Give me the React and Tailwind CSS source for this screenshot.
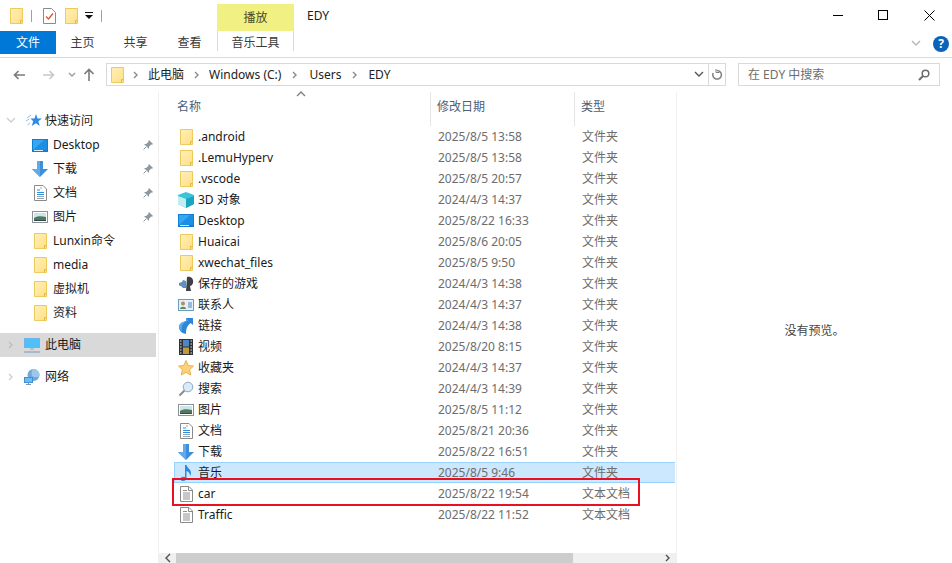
import React from 'react';

const Folder = ({ className = '' }) => (
  <svg className={className} width="13" height="16" viewBox="0 0 13 16" fill="none">
    <defs>
      <linearGradient id="fold" x1="0" y1="0" x2="1" y2="1">
        <stop offset="0" stopColor="#fff0b8" />
        <stop offset="1" stopColor="#ffdf85" />
      </linearGradient>
    </defs>
    <path d="M.5.5h12v15H.5z" fill="url(#fold)" stroke="#eccb5c" />
    <path d="M10.500 15.500v-3h2" stroke="#e2b93f" />
  </svg>
);

const TextFile = () => (
  <svg width="13" height="16" viewBox="0 0 13 16" fill="none">
    <path d="M.5.5h8.500l3.500 3.500v11.500H.5z" fill="#fff" stroke="#8a8a8a" />
    <path d="M8.500.5v4h4" stroke="#8a8a8a" />
    <path d="M3 4.500h4M3 7h7M3 9h7M3 11h7M3 13h7" stroke="#8f8f8f" />
  </svg>
);

const DocFile = () => (
  <svg width="13" height="16" viewBox="0 0 13 16" fill="none">
    <path d="M.5.5h8.500l3.500 3.500v11.500H.5z" fill="#fff" stroke="#8a8a8a" />
    <path d="M3 5h3M3 7.500h7M3 9.500h7" stroke="#2b8fe0" strokeWidth="1.200" />
    <path d="M6 3h2M3 11.500h7M3 13.500h7" stroke="#9aa5ae" />
  </svg>
);

const DesktopIcon = () => (
  <svg width="16" height="13" viewBox="0 0 16 13">
    <rect width="16" height="13" fill="#0f7fd6" />
    <path d="M1 1h14v10H1z" fill="#35a7f2" />
    <path d="M1 11 12 1h3v10z" fill="#1c8fe4" />
    <path d="M2 11.500h9" stroke="#d8eefc" />
  </svg>
);

const DownArrow = () => (
  <svg width="16" height="16" viewBox="0 0 16 16">
    <path d="M5 0h6v8h5l-8 8-8-8h5z" fill="#3d8edb" />
    <path d="M5 0h3v16L0 8h5z" fill="#62a9ea" />
  </svg>
);

const PictureIcon = () => (
  <svg width="16" height="12" viewBox="0 0 16 12">
    <rect x=".5" y=".5" width="15" height="11" fill="#fff" stroke="#8c9296" />
    <rect x="2" y="2" width="12" height="8" fill="#cfe3ea" />
    <path d="M2 7c3-2 7-2 12-1v4H2z" fill="#4d7a5e" />
    <path d="M2 9h12v1H2z" fill="#2e4a55" />
  </svg>
);

const Cube = () => (
  <svg width="16" height="16" viewBox="0 0 16 16">
    <path d="M8 0l8 3v9l-8 4-8-4V3z" fill="#39c5d6" />
    <path d="M0 4l8 3v9l-8-4z" fill="#c2eef2" />
    <path d="M16 4L8 7v9l8-4z" fill="#1ba3c2" />
  </svg>
);

const GameIcon = () => (
  <svg width="16" height="16" viewBox="0 0 16 16">
    <path d="M9 1c4-1 7 2 6 6-.5 2-2 3-3 3l1 5H8z" fill="#3c4148" />
    <path d="M1 7l3-1 1-2 3 1v7H5l-2-2-2-.5z" fill="#5c8fc6" />
  </svg>
);

const ContactIcon = () => (
  <svg width="16" height="12" viewBox="0 0 16 12">
    <rect x=".5" y=".5" width="15" height="11" fill="#e3f0fa" stroke="#6a9cc4" />
    <circle cx="5" cy="4.500" r="2" fill="#b98a5c" />
    <path d="M2 10c0-3 6-3 6 0z" fill="#5d8d4f" />
    <path d="M10 4h4M10 6h4M10 8h4" stroke="#4b87b8" />
  </svg>
);

const LinkIcon = () => (
  <svg width="14" height="16" viewBox="0 0 14 16">
    <path d="M7 0h7v7l-2.500-2C8 8 7 11 7 16 2 15 0 12 0 9c0-3 3-5 7-6z" fill="#2f86d8" />
    <path d="M7 0l2.500 2.500C5 4 2 7 3 13 1 12 0 10.500 0 9c0-3 3-5 7-6z" fill="#58a6ec" />
  </svg>
);

const VideoIcon = () => (
  <svg width="14" height="16" viewBox="0 0 14 16">
    <rect width="14" height="16" fill="#2f3338" />
    <path d="M1 2h1.500M1 5h1.500M1 8h1.500M1 11h1.500M1 14h1.500M11.500 2H13M11.500 5H13M11.500 8H13M11.500 11H13M11.500 14H13" stroke="#dfe3e6" />
    <rect x="4" y="1" width="6" height="6.500" fill="#4a88c2" />
    <rect x="4" y="8.500" width="6" height="6.500" fill="#c29a3a" />
  </svg>
);

const StarIcon = () => (
  <svg width="16" height="16" viewBox="0 0 16 16">
    <path d="M8 .5l2.300 5 5.200.6-3.900 3.600 1.100 5.300L8 12.300 3.300 15l1.100-5.300L.5 6.100l5.200-.6z" fill="#fbd27a" stroke="#eeb04e" />
  </svg>
);

const SearchIcon = () => (
  <svg width="16" height="16" viewBox="0 0 16 16" fill="none">
    <circle cx="10" cy="6" r="4.800" fill="#d6ebfb" stroke="#8fa9bc" />
    <path d="M6.500 9.500 1.500 14.500" stroke="#8b8b8b" strokeWidth="2" />
  </svg>
);

const MusicIcon = () => (
  <svg width="14" height="16" viewBox="0 0 14 16">
    <path d="M6 0h1.500c.5 3 4.500 4 4.500 8 0 1-.3 2-1 3 .2-3-2-4.500-3.500-5v7.500c0 1.500-1.500 2.500-3.500 2.500S1 15 1.500 13.500 4 11.500 6 12z" fill="#2a8ae0" />
  </svg>
);

const Computer = () => (
  <svg width="16" height="15" viewBox="0 0 16 15">
    <rect width="16" height="10" fill="#6fb4e4" />
    <rect x="1" y="1" width="14" height="8" fill="#4fc0fb" />
    <path d="M6 10h4v2H6z" fill="#a9c4d8" />
    <path d="M0 14h16" stroke="#8fb0c9" strokeWidth="1.500" />
  </svg>
);

const Network = () => (
  <svg width="16" height="16" viewBox="0 0 16 16">
    <circle cx="9.500" cy="6" r="6" fill="#6ea9d8" />
    <path d="M9 0c4 0 6.500 3 6.500 6S13 8 10 8 7 3 9 0z" fill="#9cc7e8" />
    <rect y="8" width="9" height="6" fill="#3f8fd2" />
    <rect x="1" y="9" width="7" height="4" fill="#69bdf5" />
    <path d="M2 15.500h5M4.500 14v1.500" stroke="#7a99b1" />
  </svg>
);

const QuickStar = () => (
  <svg width="16" height="14" viewBox="0 0 16 14">
    <path d="M10 0l1.500 4.500H16l-3.600 2.800 1.300 4.700L10 9.300 5.800 12l1.400-4.700-2.700-2.800h4z" fill="#2d8be0" />
    <path d="M5 1 1 4M3.500 5 0 7M4 9 1.500 11" stroke="#8cc2ee" />
  </svg>
);

const Pin = () => (
  <svg width="10" height="10" viewBox="0 0 10 10" fill="#8e98a2">
    <path d="M6 0l4 4-1 .7-.7-.2L6 6.800 6 9 1 4l2.200 0L5.500 1.700 5.300 1z" />
    <path d="M3 7 .5 9.500" stroke="#8e98a2" />
  </svg>
);

const Chevron = ({ dir = 'right', className = '' }) => {
  const d = { right: 'M3 2l3 3-3 3', down: 'M1 2l4 4 4-4', up: 'M1 7l4-4 4 4', left: 'M7 1L3 5l4 4' }[dir];
  return (
    <svg className={className} width="10" height="10" viewBox="0 0 10 10" fill="none" stroke="currentColor" strokeWidth="1.400">
      <path d={d} />
    </svg>
  );
};

const NAV_ITEMS = [
  { label: 'Desktop', icon: <DesktopIcon />, pin: true },
  { label: '下载', icon: <DownArrow />, pin: true },
  { label: '文档', icon: <DocFile />, pin: true },
  { label: '图片', icon: <PictureIcon />, pin: true },
  { label: 'Lunxin命令', icon: <Folder /> },
  { label: 'media', icon: <Folder /> },
  { label: '虚拟机', icon: <Folder /> },
  { label: '资料', icon: <Folder /> },
];

const FILES = [
  { name: '.android', date: '2025/8/5 13:58', type: '文件夹', icon: <Folder /> },
  { name: '.LemuHyperv', date: '2025/8/5 13:58', type: '文件夹', icon: <Folder /> },
  { name: '.vscode', date: '2025/8/5 20:57', type: '文件夹', icon: <Folder /> },
  { name: '3D 对象', date: '2024/4/3 14:37', type: '文件夹', icon: <Cube /> },
  { name: 'Desktop', date: '2025/8/22 16:33', type: '文件夹', icon: <DesktopIcon /> },
  { name: 'Huaicai', date: '2025/8/6 20:05', type: '文件夹', icon: <Folder /> },
  { name: 'xwechat_files', date: '2025/8/5 9:50', type: '文件夹', icon: <Folder /> },
  { name: '保存的游戏', date: '2024/4/3 14:38', type: '文件夹', icon: <GameIcon /> },
  { name: '联系人', date: '2024/4/3 14:37', type: '文件夹', icon: <ContactIcon /> },
  { name: '链接', date: '2024/4/3 14:38', type: '文件夹', icon: <LinkIcon /> },
  { name: '视频', date: '2025/8/20 8:15', type: '文件夹', icon: <VideoIcon /> },
  { name: '收藏夹', date: '2024/4/3 14:37', type: '文件夹', icon: <StarIcon /> },
  { name: '搜索', date: '2024/4/3 14:39', type: '文件夹', icon: <SearchIcon /> },
  { name: '图片', date: '2025/8/5 11:12', type: '文件夹', icon: <PictureIcon /> },
  { name: '文档', date: '2025/8/21 20:36', type: '文件夹', icon: <DocFile /> },
  { name: '下载', date: '2025/8/22 16:51', type: '文件夹', icon: <DownArrow /> },
  { name: '音乐', date: '2025/8/5 9:46', type: '文件夹', icon: <MusicIcon />, selected: true },
  { name: 'car', date: '2025/8/22 19:54', type: '文本文档', icon: <TextFile /> },
  { name: 'Traffic', date: '2025/8/22 11:52', type: '文本文档', icon: <TextFile /> },
];

function TitleBar() {
  return (
    <div className="flex h-[31px] items-start">
      <div className="flex h-full w-[217px] items-center pl-[10px]">
        <Folder />
        <div className="ml-[8px] h-[12px] w-px bg-[#a0a0a0]" />
        <svg className="ml-[11px]" width="13" height="16" viewBox="0 0 13 16" fill="none">
          <path d="M.5.5h8l4 4v11H.5z" fill="#fff" stroke="#8a8a8a" />
          <path d="M3 8.500l2.500 2.500L10 5.500" stroke="#e2562b" strokeWidth="1.400" />
        </svg>
        <Folder className="ml-[9px]" />
        <svg className="ml-[7px]" width="8" height="8" viewBox="0 0 8 8">
          <path d="M0 0h8v1H0zM0 3h8L4 7z" fill="#111" />
        </svg>
        <div className="ml-[8px] h-[12px] w-px bg-[#a0a0a0]" />
      </div>
      <div className="mt-[4px] flex h-[27px] w-[77px] items-center justify-center bg-[#f1f083] text-[#4a4a2a]">播放</div>
      <div className="ml-[13px] pt-[7px] leading-[17px] text-[#1a1a1a]">EDY</div>
      <div className="ml-auto flex h-[30px] items-center">
        <div className="flex w-[45px] justify-center">
          <div className="h-px w-[10px] bg-black" />
        </div>
        <div className="flex w-[46px] justify-center">
          <div className="h-[10px] w-[10px] border border-black" />
        </div>
        <div className="flex w-[46px] justify-center">
          <svg width="11" height="11" viewBox="0 0 11 11" stroke="#000" strokeWidth="1">
            <path d="M.5.5l10 10M10.500.5l-10 10" />
          </svg>
        </div>
      </div>
    </div>
  );
}

function RibbonTabs() {
  return (
    <div className="flex h-[27px] items-start border-b border-[#dadada] text-[#3a3a3a]">
      <div className="flex h-[23px] w-[56px] items-center justify-center bg-[#0078d7] text-white">文件</div>
      <div className="flex h-[23px] w-[53px] items-center justify-center">主页</div>
      <div className="flex h-[23px] w-[53px] items-center justify-center">共享</div>
      <div className="flex h-[23px] w-[55px] items-center justify-center">查看</div>
      <div className="flex h-[20px] w-[77px] items-center justify-center border-x border-[#dadada] pt-[4px]">音乐工具</div>
      <div className="ml-auto flex h-[23px] items-center pr-[3px] pt-[3px]">
        <Chevron dir="down" className="text-[#b5b5b5]" />
        <div className="ml-[12px] flex h-[16px] w-[16px] items-center justify-center rounded-full bg-[#0a63b8] text-[12px] font-bold text-white">?</div>
      </div>
    </div>
  );
}

function AddressBar() {
  return (
    <div className="mt-[5px] flex h-[23px] items-center">
      <div className="flex w-[106px] items-center text-[#808080]">
        <svg className="ml-[13px]" width="12" height="10" viewBox="0 0 12 10" fill="none" stroke="#7a7a7a" strokeWidth="1.600">
          <path d="M12 5H1.500M5.500 1l-4 4 4 4" />
        </svg>
        <svg className="ml-[18px]" width="12" height="10" viewBox="0 0 12 10" fill="none" stroke="#c8c8c8" strokeWidth="1.600">
          <path d="M0 5h10.500M6.500 1l4 4-4 4" />
        </svg>
        <svg className="ml-[13px]" width="8" height="6" viewBox="0 0 8 6" fill="none" stroke="#9a9a9a" strokeWidth="1.300">
          <path d="M1 1l3 3 3-3" />
        </svg>
        <svg className="ml-[7px]" width="12" height="13" viewBox="0 0 12 13" fill="none" stroke="#7a7a7a" strokeWidth="1.600">
          <path d="M6 13V1.500M1.500 6l4.500-4.500L10.500 6" />
        </svg>
      </div>
      <div className="flex h-full w-[620px] items-center border border-[#d9d9d9] pl-[4px] text-[#222]">
        <Folder />
        <Chevron dir="right" className="ml-[7px] text-[#8a8a8a]" />
        <span className="ml-[7px]">此电脑</span>
        <Chevron dir="right" className="ml-[8px] text-[#8a8a8a]" />
        <span className="ml-[7px]">Windows (C:)</span>
        <Chevron dir="right" className="ml-[9px] text-[#8a8a8a]" />
        <span className="ml-[9px]">Users</span>
        <Chevron dir="right" className="ml-[9px] text-[#8a8a8a]" />
        <span className="ml-[8px]">EDY</span>
        <Chevron dir="down" className="ml-auto mr-[4px] text-[#555]" />
        <div className="flex h-full w-[17px] items-center justify-center border-l border-[#d9d9d9]">
          <svg width="11" height="12" viewBox="0 0 11 12" fill="none" stroke="#808080" strokeWidth="1.500">
            <path d="M5 1.500a4.300 4.300 0 1 1-3.800 2.500" />
            <path d="M4 0v3.500h3.500" strokeWidth="1" />
          </svg>
        </div>
      </div>
      <div className="ml-[12px] flex h-full w-[202px] items-center border border-[#d9d9d9] pl-[9px] pr-[9px] text-[#6d6d6d]">
        <span>在 EDY 中搜索</span>
        <svg className="ml-auto" width="12" height="12" viewBox="0 0 12 12" fill="none" stroke="#6b6b6b">
          <circle cx="7.500" cy="4.500" r="3.300" strokeWidth="1.500" />
          <path d="M5 7 1 11" strokeWidth="2" />
        </svg>
      </div>
    </div>
  );
}

function NavPane() {
  return (
    <div className="h-full w-[159px] shrink-0 border-r border-[#f0f0f0] pt-[17px] text-[#1a1a1a]">
      <div className="flex h-[24px] items-center pl-[6px]">
        <Chevron dir="down" className="text-[#cfcfcf]" />
        <span className="ml-[10px] flex w-[16px] justify-center"><QuickStar /></span>
        <span className="ml-[3px]">快速访问</span>
      </div>
      {NAV_ITEMS.map((item) => (
        <div key={item.label} className="flex h-[24px] items-center pl-[32px] pr-[5px]">
          <span className="flex w-[16px] justify-center">{item.icon}</span>
          <span className="ml-[5px]">{item.label}</span>
          {item.pin && <span className="ml-auto"><Pin /></span>}
        </div>
      ))}
      <div className="mt-[8px] flex h-[24px] w-[156px] items-center bg-[#d9d9d9] pl-[6px]">
        <Chevron dir="right" className="text-[#bdbdbd]" />
        <span className="ml-[8px]"><Computer /></span>
        <span className="ml-[5px]">此电脑</span>
      </div>
      <div className="mt-[8px] flex h-[24px] items-center pl-[6px]">
        <Chevron dir="right" className="text-[#cfcfcf]" />
        <span className="ml-[8px]"><Network /></span>
        <span className="ml-[5px]">网络</span>
      </div>
    </div>
  );
}

function FileList() {
  return (
    <div className="relative flex h-full w-[517px] shrink-0 flex-col">
      <div className="flex h-[34px] shrink-0 text-[#4c607a]">
        <div className="relative flex w-[272px] items-center border-r border-[#e5e5e5] pb-[4px] pl-[18px]">
          名称
          <Chevron dir="up" className="absolute left-[137px] top-[-3px] text-[#808080]" />
        </div>
        <div className="flex w-[144px] items-center border-r border-[#e5e5e5] pb-[4px] pl-[6px]">修改日期</div>
        <div className="flex flex-1 items-center pb-[4px] pl-[6px]">类型</div>
      </div>
      {FILES.map((file) => (
        <div
          key={file.name}
          className={`ml-[15px] mr-px flex h-[21px] shrink-0 items-center ${file.selected ? 'border-y border-[#99d1ff] bg-[#cce8ff] shadow-[inset_1px_0_0_#99d1ff]' : ''}`}
        >
          <span className="ml-[4px] flex w-[16px] shrink-0 justify-center">{file.icon}</span>
          <span className="ml-[4px] w-[240px] shrink-0 text-[#1a1a1a]">{file.name}</span>
          <span className="w-[144px] shrink-0 text-[#6d6d6d]">{file.date}</span>
          <span className="text-[#6d6d6d]">{file.type}</span>
        </div>
      ))}
      <div className="absolute left-[13px] top-[386px] h-[28px] w-[468px] border-2 border-[#e81123]" />
      <div className="mt-auto flex h-[10px] shrink-0 bg-[#f0f0f0] text-[#505050]">
        <div className="flex w-[17px] items-center justify-center"><Chevron dir="left" /></div>
        <div className="w-[397px] bg-[#cdcdcd]" />
        <div className="ml-auto flex w-[17px] items-center justify-center"><Chevron dir="right" /></div>
      </div>
    </div>
  );
}

export default function App() {
  return (
    <div className="flex h-[563px] w-[952px] flex-col overflow-hidden bg-white font-['Noto_Sans','Noto_Sans_CJK_SC',sans-serif] text-[12px]">
      <TitleBar />
      <RibbonTabs />
      <AddressBar />
      <div className="mt-[6px] flex min-h-0 flex-1">
        <NavPane />
        <FileList />
        <div className="flex flex-1 items-center justify-center border-l border-[#f0f0f0] pt-[6px] text-[#444]">没有预览。</div>
      </div>
    </div>
  );
}
